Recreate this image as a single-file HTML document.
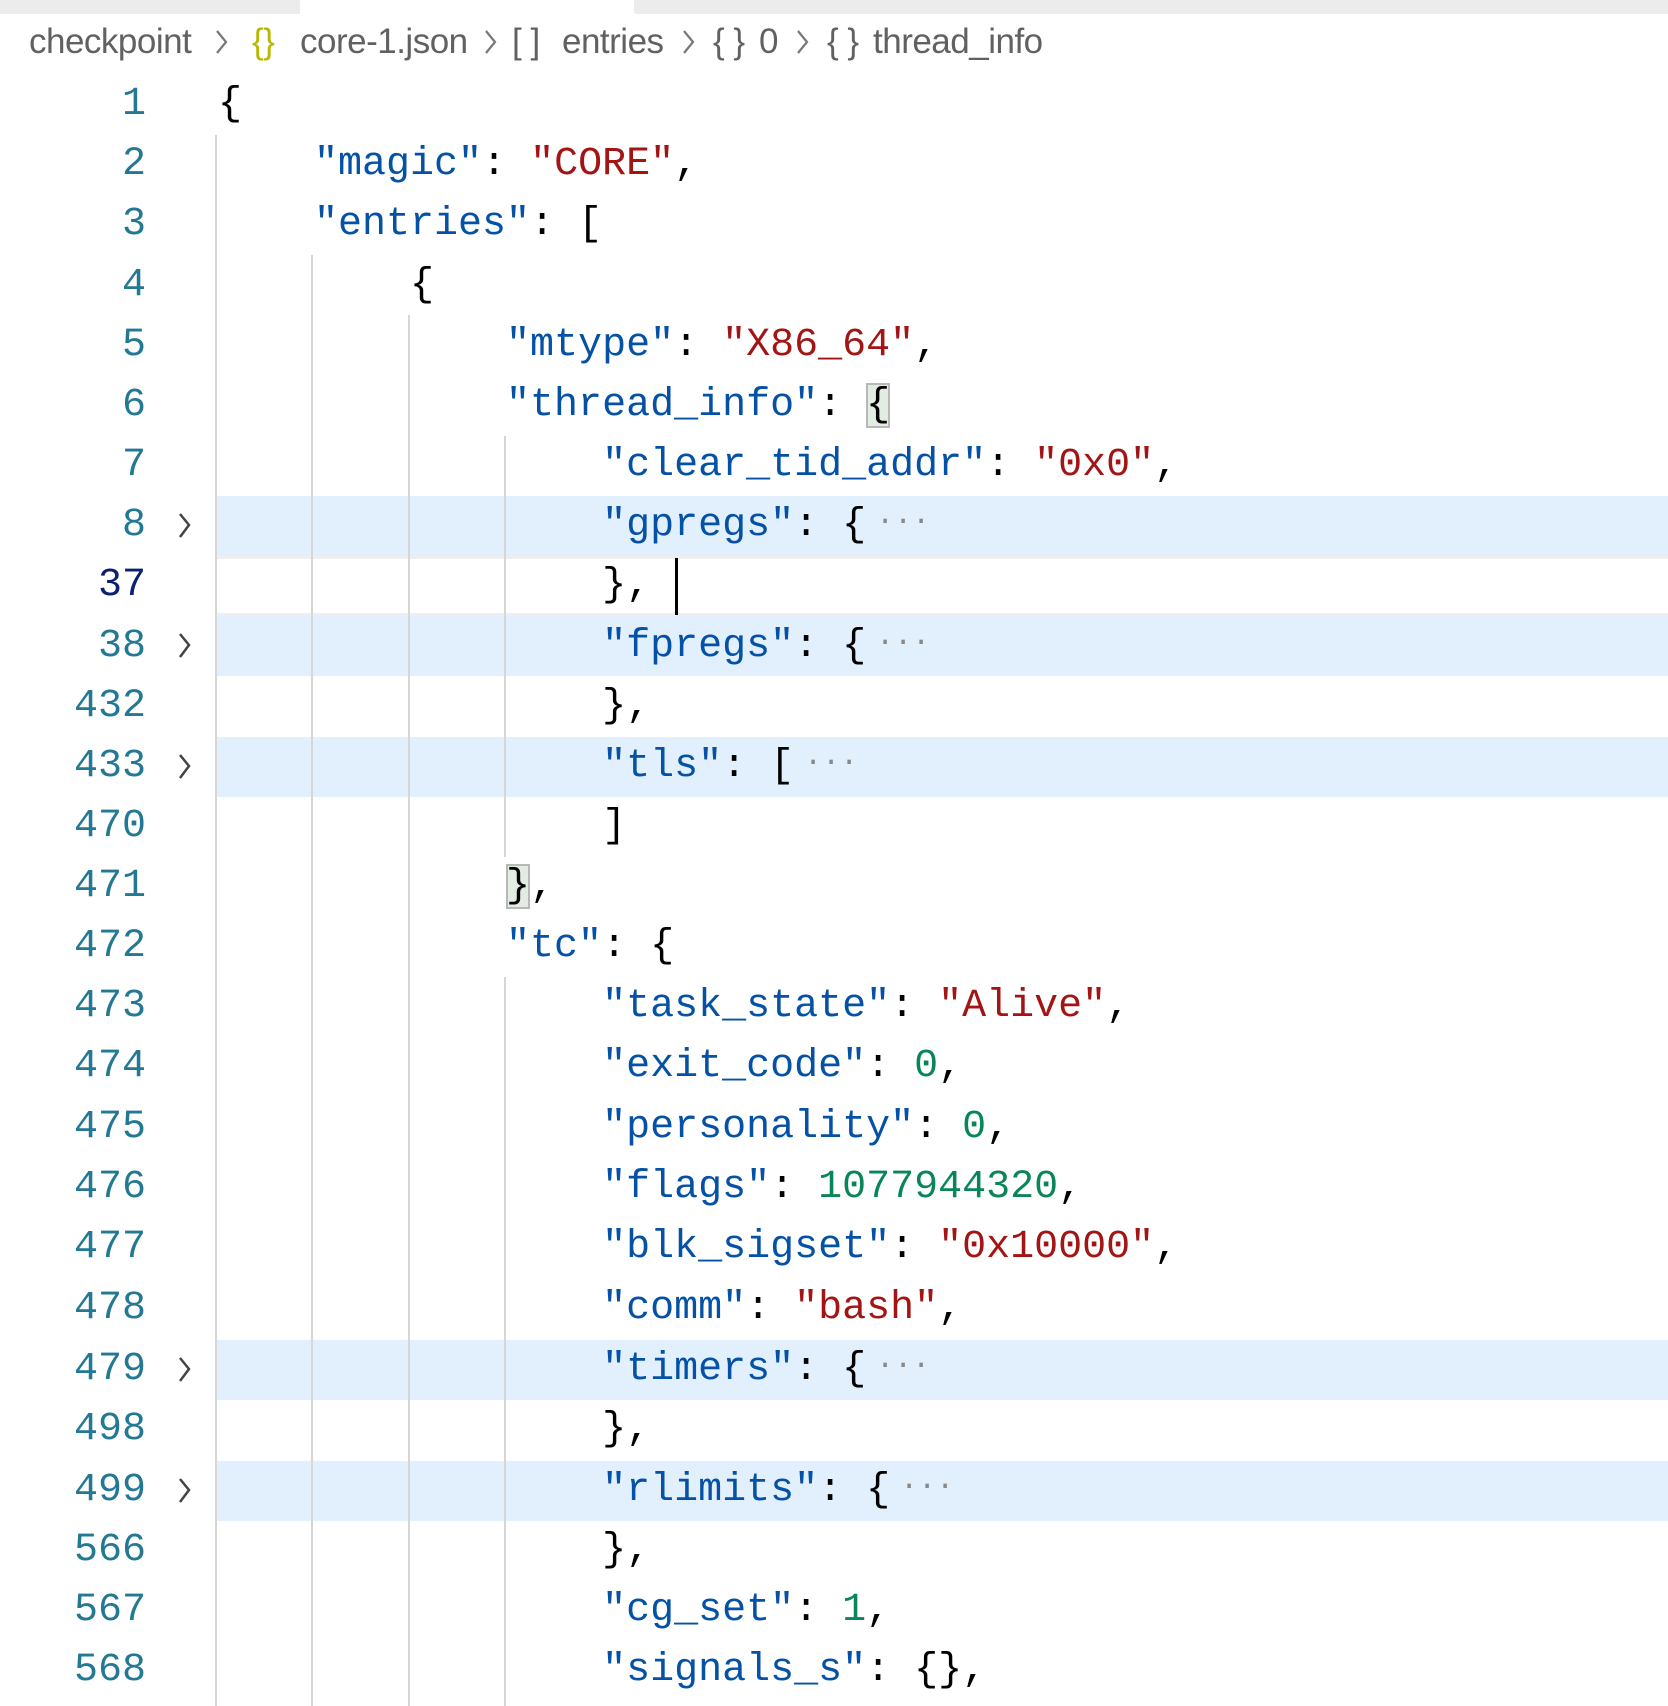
<!DOCTYPE html>
<html><head><meta charset="utf-8"><style>
html,body{margin:0;padding:0;background:#fff;width:1668px;height:1706px;overflow:hidden;position:relative}
.strip{position:absolute;top:0;left:0;width:1668px;height:14px;background:#ececec}
.strip i{position:absolute;left:300px;width:334px;top:0;height:14px;background:#fff}
.b{position:absolute;top:20px;font:35px "Liberation Sans",sans-serif;color:#616161;white-space:pre;letter-spacing:-0.5px;line-height:44px}
.y{color:#b8b800}
.ln{position:absolute;left:0;width:146px;text-align:right;font:40px "Liberation Mono",monospace;color:#237893;height:60px;line-height:60px}
.ln.cur{color:#0b216f}
.code{position:absolute;left:218px;font:40px "Liberation Mono",monospace;white-space:pre;height:60px;line-height:60px;color:#000}
.hl{position:absolute;left:215px;right:0;height:60px;background:#e2f0fd}
.curl{position:absolute;left:215px;right:0;height:54px;border-top:3px solid #eeeeee;border-bottom:3px solid #eeeeee}
.g{position:absolute;width:2px;background:#d6d6d6}
.k{color:#0451a5}.s{color:#a31515}.n{color:#098658}
.e{color:#888;font-size:30px;margin-left:10px;position:relative;top:-6px}
.bx{background:#e3ece3;outline:2px solid #b8b8b8;outline-offset:-2px}
.caret{position:absolute;width:3px;background:#000}
</style></head><body>
<div class="strip"><i></i></div>
<span class="b" style="left:29px">checkpoint</span>
<span class="b y" style="left:252px">{}</span>
<span class="b" style="left:300px">core-1.json</span>
<span class="b" style="left:512px">[ ]</span>
<span class="b" style="left:562px">entries</span>
<span class="b" style="left:713px">{ }</span>
<span class="b" style="left:759px">0</span>
<span class="b" style="left:827px">{ }</span>
<span class="b" style="left:873px">thread_info</span>
<svg width="1000" height="70" style="position:absolute;left:0;top:0" fill="none" stroke="#777" stroke-width="2.2">
<path d="M217 31 L226 42 L217 53"/>
<path d="M486 31 L495 42 L486 53"/>
<path d="M684 31 L693 42 L684 53"/>
<path d="M798 31 L807 42 L798 53"/>
</svg>

<div class="hl" style="top:496px"></div>
<div class="curl" style="top:556px"></div>
<div class="hl" style="top:616px"></div>
<div class="hl" style="top:737px"></div>
<div class="hl" style="top:1340px"></div>
<div class="hl" style="top:1461px"></div>

<div class="g" style="left:215px;top:135px;height:1571px"></div>
<div class="g" style="left:311px;top:255px;height:1451px"></div>
<div class="g" style="left:408px;top:315px;height:1391px"></div>
<div class="g" style="left:504px;top:436px;height:421px"></div>
<div class="g" style="left:504px;top:977px;height:729px"></div>

<div class="caret" style="left:675px;top:558px;height:57px"></div>

<svg width="30" height="1706" style="position:absolute;left:170px;top:0" fill="none" stroke="#444" stroke-width="2.5">
<path d="M10 514 L19 525 L10 537"/>
<path d="M10 634 L19 645 L10 657"/>
<path d="M10 755 L19 766 L10 778"/>
<path d="M10 1358 L19 1369 L10 1381"/>
<path d="M10 1479 L19 1490 L10 1502"/>
</svg>

<div class="ln" style="top:75px">1</div><div class="code" style="top:75px">{</div>
<div class="ln" style="top:135px">2</div><div class="code" style="top:135px">    <span class="k">"magic"</span>: <span class="s">"CORE"</span>,</div>
<div class="ln" style="top:195px">3</div><div class="code" style="top:195px">    <span class="k">"entries"</span>: [</div>
<div class="ln" style="top:256px">4</div><div class="code" style="top:256px">        {</div>
<div class="ln" style="top:316px">5</div><div class="code" style="top:316px">            <span class="k">"mtype"</span>: <span class="s">"X86_64"</span>,</div>
<div class="ln" style="top:376px">6</div><div class="code" style="top:376px">            <span class="k">"thread_info"</span>: <span class="bx">{</span></div>
<div class="ln" style="top:436px">7</div><div class="code" style="top:436px">                <span class="k">"clear_tid_addr"</span>: <span class="s">"0x0"</span>,</div>
<div class="ln" style="top:496px">8</div><div class="code" style="top:496px">                <span class="k">"gpregs"</span>: {<span class="e">···</span></div>
<div class="ln cur" style="top:556px">37</div><div class="code" style="top:556px">                },</div>
<div class="ln" style="top:617px">38</div><div class="code" style="top:617px">                <span class="k">"fpregs"</span>: {<span class="e">···</span></div>
<div class="ln" style="top:677px">432</div><div class="code" style="top:677px">                },</div>
<div class="ln" style="top:737px">433</div><div class="code" style="top:737px">                <span class="k">"tls"</span>: [<span class="e">···</span></div>
<div class="ln" style="top:797px">470</div><div class="code" style="top:797px">                ]</div>
<div class="ln" style="top:857px">471</div><div class="code" style="top:857px">            <span class="bx">}</span>,</div>
<div class="ln" style="top:917px">472</div><div class="code" style="top:917px">            <span class="k">"tc"</span>: {</div>
<div class="ln" style="top:977px">473</div><div class="code" style="top:977px">                <span class="k">"task_state"</span>: <span class="s">"Alive"</span>,</div>
<div class="ln" style="top:1037px">474</div><div class="code" style="top:1037px">                <span class="k">"exit_code"</span>: <span class="n">0</span>,</div>
<div class="ln" style="top:1098px">475</div><div class="code" style="top:1098px">                <span class="k">"personality"</span>: <span class="n">0</span>,</div>
<div class="ln" style="top:1158px">476</div><div class="code" style="top:1158px">                <span class="k">"flags"</span>: <span class="n">1077944320</span>,</div>
<div class="ln" style="top:1218px">477</div><div class="code" style="top:1218px">                <span class="k">"blk_sigset"</span>: <span class="s">"0x10000"</span>,</div>
<div class="ln" style="top:1279px">478</div><div class="code" style="top:1279px">                <span class="k">"comm"</span>: <span class="s">"bash"</span>,</div>
<div class="ln" style="top:1340px">479</div><div class="code" style="top:1340px">                <span class="k">"timers"</span>: {<span class="e">···</span></div>
<div class="ln" style="top:1400px">498</div><div class="code" style="top:1400px">                },</div>
<div class="ln" style="top:1461px">499</div><div class="code" style="top:1461px">                <span class="k">"rlimits"</span>: {<span class="e">···</span></div>
<div class="ln" style="top:1521px">566</div><div class="code" style="top:1521px">                },</div>
<div class="ln" style="top:1581px">567</div><div class="code" style="top:1581px">                <span class="k">"cg_set"</span>: <span class="n">1</span>,</div>
<div class="ln" style="top:1641px">568</div><div class="code" style="top:1641px">                <span class="k">"signals_s"</span>: {},</div>
</body></html>
